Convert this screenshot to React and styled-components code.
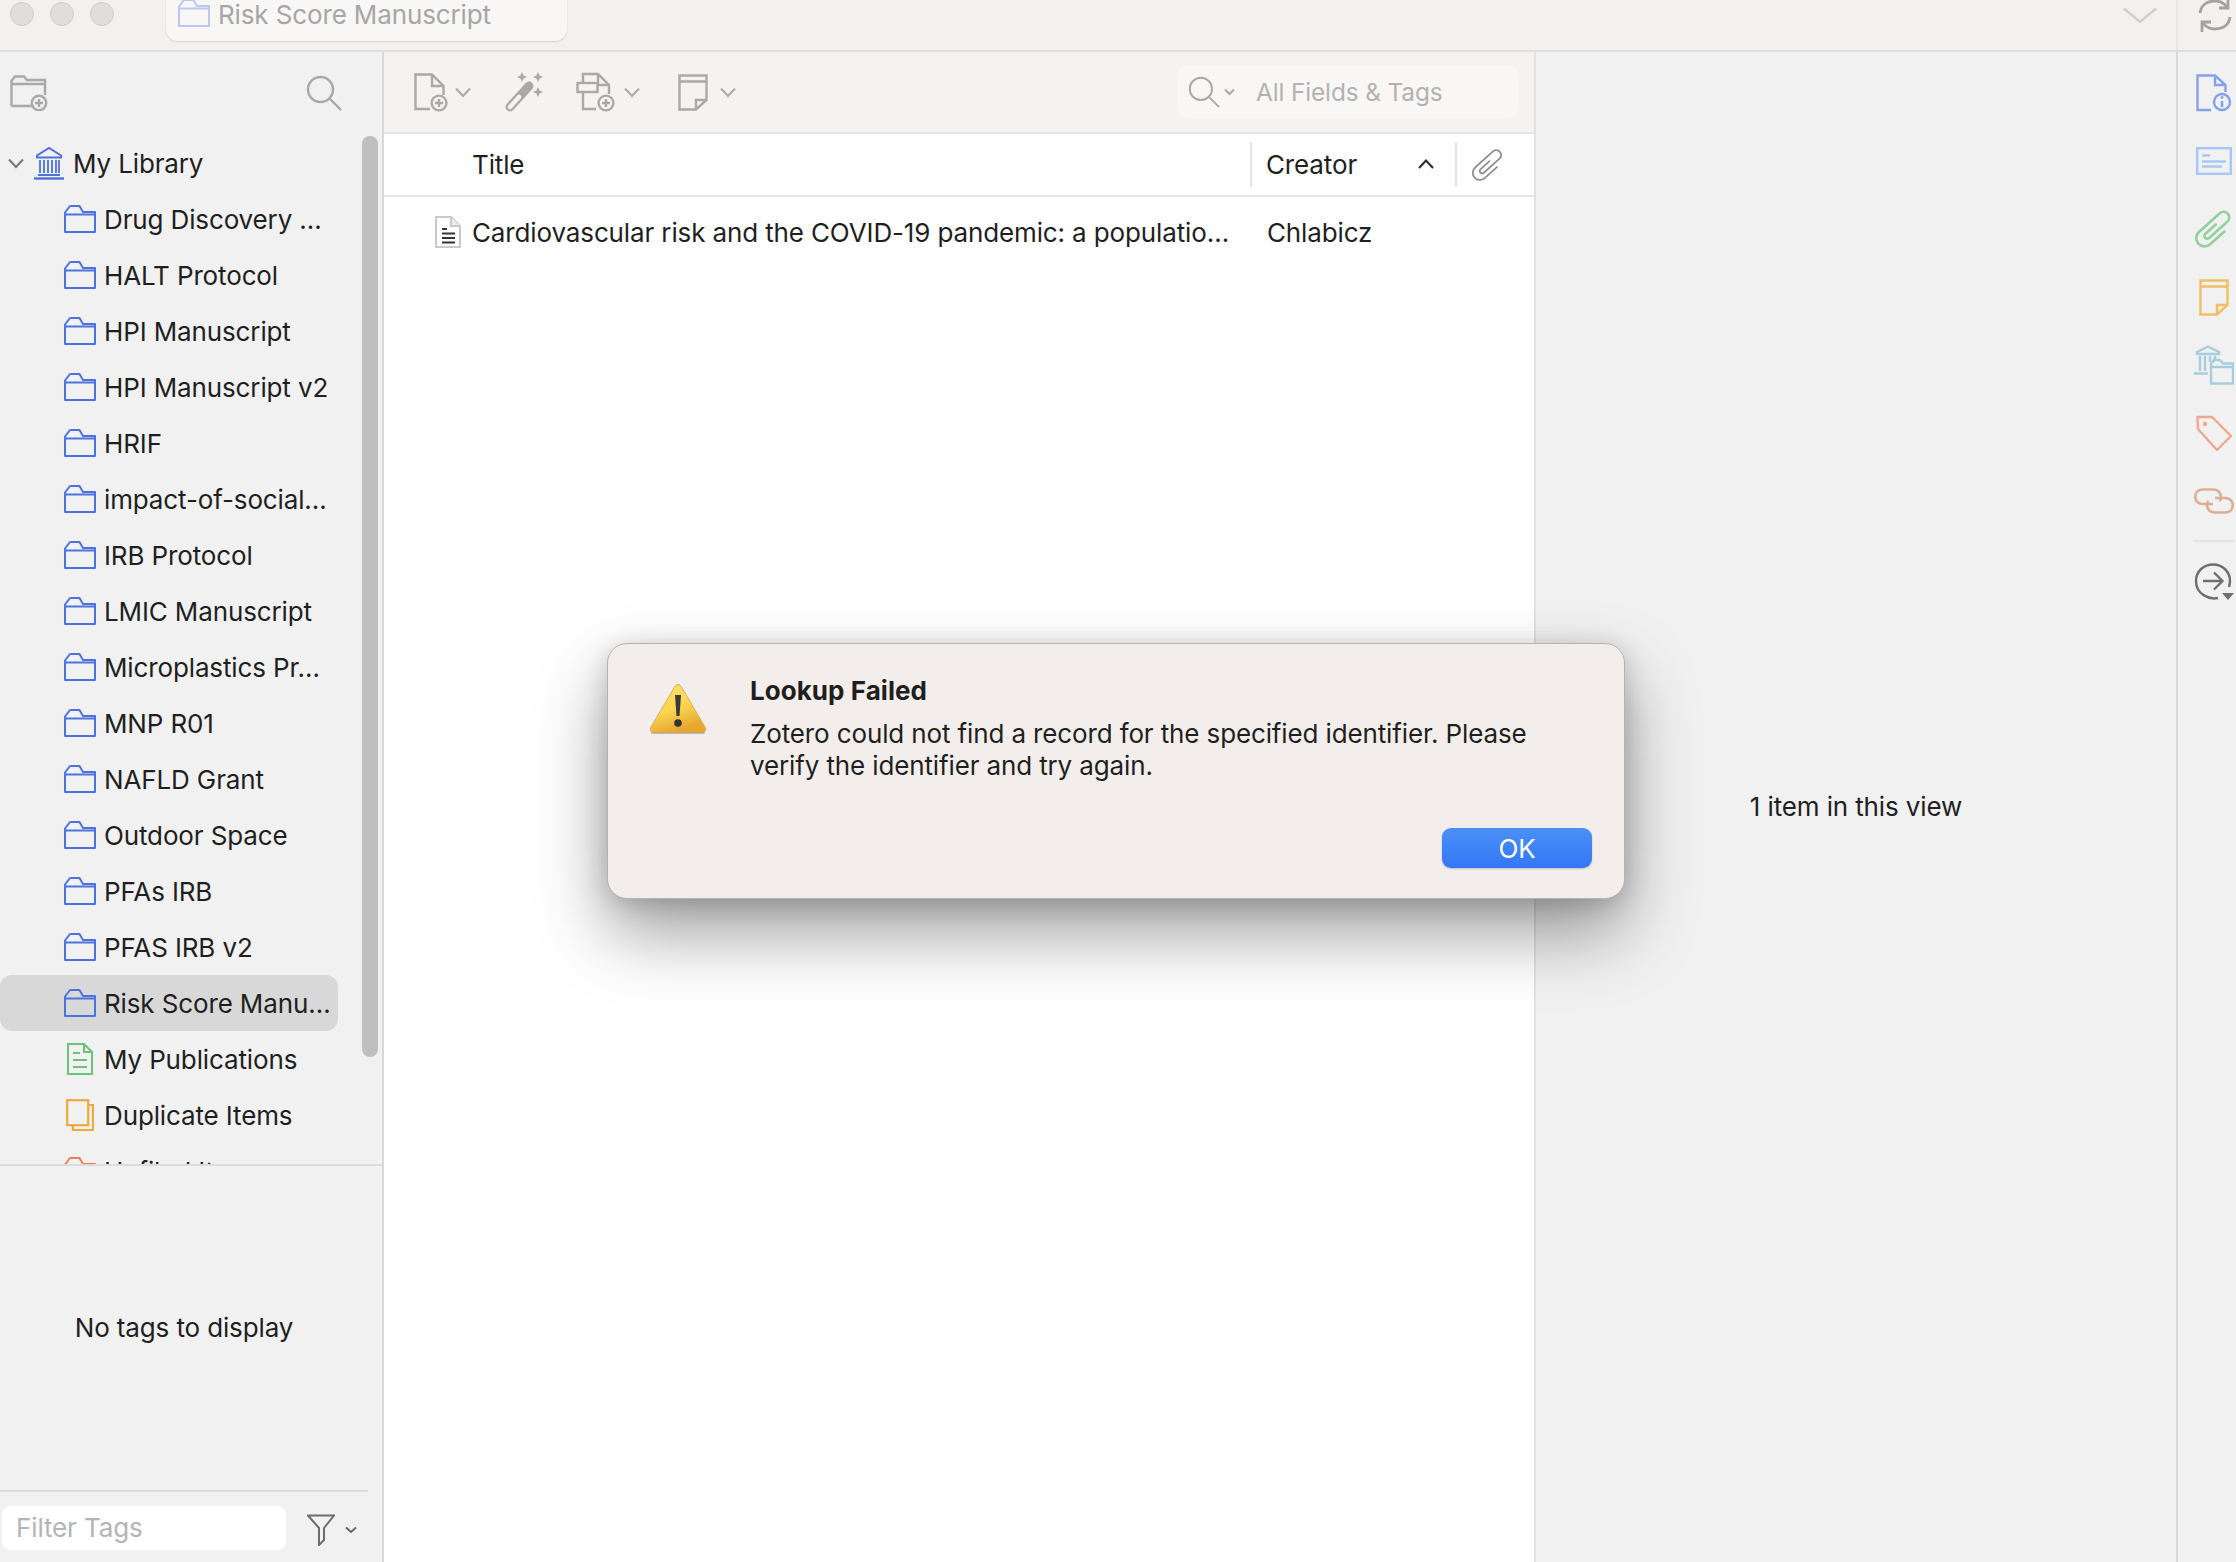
import React from "react";
import styled, { createGlobalStyle } from "styled-components";

const Global = createGlobalStyle`
  html, body { margin: 0; padding: 0; width: 2236px; height: 1562px; overflow: hidden; background: #f1f1f1; }
  * { box-sizing: border-box; }
  body { font-family: Inter, "Noto Sans", "Liberation Sans", sans-serif; color: #1f1f1f; }
`;

const Window = styled.div`
  position: relative; width: 2236px; height: 1562px; display: flex; flex-direction: column; overflow: hidden; font-size: 26px; letter-spacing: -0.13px;
`;
const TopBar = styled.header`
  height: 52px; flex: none; display: flex; background: #f2f1f0; border-bottom: 2px solid #dedede; overflow: hidden;
`;
const Lights = styled.div`
  display: flex; gap: 16px; padding: 2px 0 0 10px; width: 166px; flex: none;
`;
const Light = styled.span`
  width: 24px; height: 24px; border-radius: 50%; background: #dfdedc; border: 1px solid #d0cfcd;
`;
const Tab = styled.div`
  width: 401px; height: 41px; flex: none; display: flex; align-items: flex-start; gap: 8px; padding-left: 12px;
  background: #f8f7f5; border-radius: 0 0 12px 12px; box-shadow: 0 1px 2px rgba(0,0,0,.12); color: #a6a6a6; line-height: 30px;
  svg { margin-top: -1px; flex: none; }
`;
const TopSpacer = styled.div`
  flex: 1; display: flex; justify-content: flex-end; padding: 7px 19px 0 0;
`;
const TopStrip = styled.div`
  width: 60px; flex: none; border-left: 2px solid #e6e6e6; padding: 0 0 0 20px;
  svg { display: block; margin-top: -3px; }
`;
const Main = styled.main`
  flex: 1; display: flex; min-height: 0;
`;
const Sidebar = styled.aside`
  width: 384px; flex: none; display: flex; flex-direction: column; background: #f1f1f1; border-right: 2px solid #d9d9d9; position: relative;
`;
const SideTools = styled.div`
  height: 83px; flex: none; display: flex; justify-content: space-between; padding: 23px 40px 0 10px; align-items: flex-start;
`;
const Tree = styled.ul`
  flex: 1; min-height: 0; margin: 0; padding: 0; list-style: none; overflow: hidden;
`;
const TreeRow = styled.li`
  height: 56px; width: 338px; display: flex; align-items: center; padding-left: ${p => p.$pad}px; border-radius: 12px;
  background: ${p => (p.$selected ? "#d8d8d8" : "transparent")}; white-space: nowrap;
`;
const IconSlot = styled.span`
  width: ${p => p.$w}px; flex: none; display: flex; justify-content: center; align-items: center; margin-right: ${p => p.$mr ?? 8}px;
`;
const Scrollbar = styled.div`
  position: absolute; left: 362px; top: 84px; width: 16px; height: 921px; border-radius: 8px; background: #bfbfbf;
`;
const TagPanel = styled.section`
  height: 326px; flex: none; border-top: 2px solid #dcdcdc; display: flex; align-items: center; justify-content: center; padding: 0 14px 1px 0;
`;
const FilterBar = styled.div`
  height: 72px; flex: none; margin-right: 14px; border-top: 2px solid #dcdcdc; display: flex; align-items: flex-start; padding: 14px 0 0 2px;
`;
const FilterInput = styled.div`
  width: 284px; height: 44px; border-radius: 9px; background: #fff; color: #b4b4b4; line-height: 44px; padding-left: 14px;
`;
const FilterIcon = styled.div`
  display: flex; align-items: center; gap: 10px; padding: 8px 0 0 21px;
`;
const Center = styled.section`
  width: 1152px; flex: none; display: flex; flex-direction: column; background: #fff; border-right: 2px solid #e2e2e2;
`;
const Toolbar = styled.div`
  height: 82px; flex: none; background: #f4f3f1; border-bottom: 2px solid #e6e6e6; display: flex; align-items: flex-start; padding: 20px 16px 0 30px;
`;
const ToolButton = styled.div`
  display: flex; align-items: center; gap: ${p => p.$gap ?? 7}px; margin-right: ${p => p.$mr}px; height: 40px;
`;
const Grow = styled.div`flex: 1;`;
const SearchBox = styled.div`
  width: 340px; height: 53px; margin-top: -7px; border-radius: 9px; background: #f8f7f5; display: flex; align-items: center; padding-left: 10px; color: #b2b2b2;
`;
const SearchChevron = styled.span`margin-left: 4px; display: flex;`;
const SearchLabel = styled.span`margin-left: 21px; font-size: 24.4px;`;
const HeaderRow = styled.div`
  height: 63px; flex: none; display: flex; border-bottom: 2px solid #e6e6e6; align-items: center;
`;
const TitleCol = styled.div`
  width: 866px; padding-left: 88px; flex: none; display: flex; align-items: center;
`;
const Divider = styled.span`
  width: 2px; height: 45px; background: #e4e4e4; flex: none; margin-top: -1px;
`;
const CreatorCol = styled.div`
  width: 203px; padding-left: 14px; padding-right: 21px; flex: none; display: flex; align-items: center; justify-content: space-between;
`;
const ClipCol = styled.div`
  flex: 1; padding-left: 12px; display: flex; align-items: center;
`;
const ItemRow = styled.div`
  height: 70px; display: flex; align-items: center; white-space: nowrap;
`;
const ItemTitle = styled.div`
  width: 868px; flex: none; padding-left: 51px; display: flex; align-items: center; gap: 11px;
`;
const ItemCreator = styled.div`padding-left: 15px;`;
const Pane = styled.section`
  flex: 1; display: flex; align-items: center; justify-content: center; background: #f1f1f1; padding-bottom: 2px;
`;
const Strip = styled.nav`
  width: 60px; flex: none; background: #f1f1f1; border-left: 2px solid #d9d9d9; padding: 7px 0 0 16px; overflow: hidden;
`;
const StripButton = styled.div`
  width: 40px; height: 68px; display: flex; align-items: center; justify-content: center; svg { flex: none; }
`;
const StripRule = styled.div`
  width: 40px; height: 2px; background: #e4e4e4; margin: 5px 0 6px;
`;
const Dialog = styled.div`
  position: absolute; left: 607px; top: 643px; width: 1018px; height: 256px; border-radius: 20px; background: #f3eeeb;
  border: 1px solid #b5b3b1; box-shadow: 0 34px 70px rgba(0,0,0,.38), 0 4px 24px rgba(0,0,0,.16);
  display: grid; grid-template-columns: 142px 1fr;
`;
const AlertIcon = styled.div`padding: 39px 0 0 41px;`;
const AlertBody = styled.div`display: flex; flex-direction: column; padding: 30px 32px 0 0;`;
const AlertTitle = styled.div`font-weight: 700; line-height: 34px; letter-spacing: 0.05px;`;
const AlertText = styled.p`margin: 10px 0 0; line-height: 32px; width: 800px;`;
const OkButton = styled.button`
  position: absolute; right: 32px; bottom: 30px; width: 150px; height: 40px; border: 0; border-radius: 9px; color: #fff; font: inherit; letter-spacing: inherit;
  background: linear-gradient(#4b90f8, #3377f6); box-shadow: 0 1px 2px rgba(0,0,0,.2); padding: 0;
`;

const G = "#a9a9a9";
const Chevron = ({ w = 16, h = 9, c = "#ababab", sw = 2, up }) => (
  <svg width={w} height={h + 2} viewBox={`0 0 ${w} ${h + 2}`} fill="none">
    <path d={up ? `M1 ${h}L${w / 2} 1.5L${w - 1} ${h}` : `M1 1.5L${w / 2} ${h}L${w - 1} 1.5`} stroke={c} strokeWidth={sw} />
  </svg>
);
const Folder = ({ c = "#4c72e0", w = 32, h = 28, sw = 2 }) => (
  <svg width={w} height={h} viewBox="0 0 32 28" fill="none" stroke={c} strokeWidth={sw} strokeLinejoin="round">
    <path d="M1 27V7.5L6 1H15.5L19 7H31V27Z" />
    <path d="M1 9.5H31" />
  </svg>
);
const Library = () => (
  <svg width="30" height="34" viewBox="0 0 30 34" fill="none" stroke="#4c72e0" strokeWidth="2">
    <path d="M3 9.5L15 2L27 9.5V11.5H3Z" />
    <path d="M6 14V27M10 14V27M14 14V27M18 14V27M22 14V27M25 14V27M4 29H26" strokeWidth="1.8" />
    <path d="M0 32.5H30" strokeWidth="2.4" />
  </svg>
);
const FolderAdd = () => (
  <svg width="38" height="36" viewBox="0 0 38 36" fill="none" stroke={G} strokeWidth="2.4">
    <path d="M1.5 31V6L5 1.5H14L17 5H35V20M1.5 31H22M1.5 9H35" />
    <circle cx="29" cy="28" r="7.2" fill="#f1f1f1" />
    <path d="M29 24V32M25 28H33" />
  </svg>
);
const Magnifier = ({ s = 36, c = G, sw = 2.4 }) => (
  <svg width={s} height={s} viewBox="0 0 36 36" fill="none" stroke={c} strokeWidth={sw}>
    <circle cx="14.5" cy="14.5" r="12.5" />
    <path d="M23.5 23.5L35 35" />
  </svg>
);
const DocAdd = () => (
  <svg width="34" height="39" viewBox="0 0 34 39" fill="none" stroke={G} strokeWidth="2.4">
    <path d="M16 36H1.5V1.5H18L29.5 13V22M18 1.5V13H29.5" />
    <circle cx="25" cy="30" r="7.4" fill="#f4f3f1" />
    <path d="M25 26V34M21 30H29" />
  </svg>
);
const Wand = () => (
  <svg width="40" height="40" viewBox="0 0 40 40" fill="none">
    <path d="M5 35L24 14" stroke={G} strokeWidth="9" strokeLinecap="round" />
    <path d="M5 35L14 25" stroke="#f4f3f1" strokeWidth="4.5" strokeLinecap="round" />
    <path fill={G} d="M17 0L18.6 3.4L22 5L18.6 6.6L17 10L15.4 6.6L12 5L15.4 3.4ZM33 0L34.6 3.4L38 5L34.6 6.6L33 10L31.4 6.6L28 5L31.4 3.4ZM33 15L34.6 18.4L38 20L34.6 21.6L33 25L31.4 21.6L28 20L31.4 18.4Z" />
  </svg>
);
const AttachAdd = () => (
  <svg width="40" height="40" viewBox="0 0 40 40" fill="none" stroke={G} strokeWidth="2.4">
    <path d="M7 11V2H22L33 13V22M22 2V13H33M7 20V37H20" />
    <rect x="1.5" y="11" width="20" height="9" fill="#f4f3f1" />
    <circle cx="30" cy="31" r="7.4" fill="#f4f3f1" />
    <path d="M30 27V35M26 31H34" />
  </svg>
);
const Note = ({ c = G, w = 30, h = 37, sw = 2.4 }) => (
  <svg width={w} height={h} viewBox="0 0 30 37" fill="none" stroke={c} strokeWidth={sw}>
    <path d="M1.5 1.5H28.5V26L18 35.5H1.5Z" />
    <path d="M1.5 7.5H28.5M18 35.5V26H28.5" />
  </svg>
);
const Clip = ({ c, w, h, sw }) => (
  <svg width={w} height={h} viewBox="-2 -14 50 48" fill="none">
    <g transform="rotate(-42 23 10)" stroke={c} strokeWidth={sw} strokeLinecap="round">
      <path d="M28 7.5H12a3.25 3.25 0 0 0 0 6.5H40a6.5 6.5 0 0 0 0-13H8a9.5 9.5 0 0 0 0 19H30" />
    </g>
  </svg>
);
const ItemDoc = () => (
  <svg width="26" height="32" viewBox="0 0 26 32" fill="none">
    <path d="M1 1H16L25 10V31H1Z" fill="#fff" stroke="#c9c9c9" strokeWidth="2" />
    <path d="M16 1V10H25" fill="#ececec" stroke="#c9c9c9" strokeWidth="2" />
    <path d="M7 13H12M7 17.5H20M7 22H20M7 26.5H20" stroke="#333" strokeWidth="2" />
  </svg>
);
const PubDoc = () => (
  <svg width="26" height="32" viewBox="0 0 26 32" fill="none" stroke="#6cc27c" strokeWidth="2">
    <path d="M1 1H17L25 9V31H1Z" />
    <path d="M17 1V9H25M6 10H13M6 17H20M6 24H20" />
  </svg>
);
const Duplicate = () => (
  <svg width="28" height="32" viewBox="0 0 28 32" fill="none" stroke="#efa93a" strokeWidth="2.2">
    <rect x="1.2" y="1.2" width="21" height="25" />
    <path d="M22 6H27V31H7V26" />
  </svg>
);
const Warning = () => (
  <svg width="58" height="52" viewBox="0 0 58 52">
    <defs>
      <linearGradient id="warn" x1="0" y1="0" x2="0.35" y2="1">
        <stop offset="0" stopColor="#fbe46a" />
        <stop offset="0.6" stopColor="#f8d44f" />
        <stop offset="1" stopColor="#e9a731" />
      </linearGradient>
    </defs>
    <path d="M29 1.5C31 1.5 32 3 33 5L56 44C57.5 47 56.5 49.5 53 49.5H5C1.5 49.5 .5 47 2 44L25 5C26 3 27 1.5 29 1.5Z" fill="url(#warn)" stroke="#d9b04f" strokeWidth="1" />
    <path d="M2.5 50H55.5" stroke="#b9a585" strokeWidth="1.5" />
    <path d="M26 12H32L30.5 33H27.5Z" fill="#3a3a3a" />
    <circle cx="29" cy="40" r="3.8" fill="#333" />
  </svg>
);
const Sync = () => (
  <svg width="34" height="36" viewBox="0 0 34 36" fill="none" stroke="#a2a2a2" strokeWidth="2.8">
    <path d="M2 16C3 8 9 4 17 4C22 4 26 6 29 10M32 20C31 28 25 32 17 32C12 32 8 30 5 26" />
    <path d="M30 1V11H21M4 35V25H13" />
  </svg>
);
const InfoDoc = () => (
  <svg width="36" height="38" viewBox="0 0 36 38" fill="none" stroke="#84a2ea" strokeWidth="2.4">
    <path d="M15 36H1.5V1.5H19L29.5 11V18M19 1.5V11H29.5" />
    <circle cx="26" cy="28" r="8" fill="#f1f1f1" />
    <path d="M26 27V33" strokeWidth="2.6" />
    <circle cx="26" cy="23.5" r="1.4" fill="#84a2ea" stroke="none" />
  </svg>
);
const Card = () => (
  <svg width="36" height="28" viewBox="0 0 36 28" fill="none" stroke="#a9c7f5" strokeWidth="2.4">
    <rect x="1.2" y="1.2" width="33.6" height="25.6" />
    <path d="M6 8.5H14M6 14.5H30M6 19.5H26" />
  </svg>
);
const LibFolder = () => (
  <svg width="40" height="40" viewBox="0 0 40 40" fill="none" stroke="#a6cddd" strokeWidth="2.4">
    <path d="M3 7L14 1.5L25 7V9H3Z" />
    <path d="M6 11V26M11 11V26M16 11V17M21 11V17M0 28.5H14" />
    <path d="M17 38.5V19L20 15H26L29 18.5H39V38.5Z" fill="#f1f1f1" />
    <path d="M17 22H39" />
  </svg>
);
const Tag = () => (
  <svg width="36" height="36" viewBox="0 0 36 36" fill="none" stroke="#f3a68f" strokeWidth="2.4" strokeLinejoin="round">
    <path d="M1.5 2H16L35 21L21 35L2 14Z" />
    <circle cx="9" cy="9" r="2.2" fill="#f3a68f" stroke="none" />
  </svg>
);
const Link = () => (
  <svg width="40" height="26" viewBox="0 0 40 26" fill="none" stroke="#dcae94" strokeWidth="2.6">
    <path d="M19 16H9C4.5 16 1.2 13 1.2 9C1.2 4.5 4.5 1.5 9 1.5H19C23.5 1.5 27 4.5 27 9C27 10.5 26.5 12 25.5 13" />
    <path d="M21 10H31C35.5 10 38.8 13 38.8 17C38.8 21.5 35.5 24.5 31 24.5H21C16.5 24.5 13 21.5 13 17C13 15.5 13.5 14 14.5 13" />
  </svg>
);
const Locate = () => (
  <svg width="40" height="38" viewBox="0 0 40 38" fill="none" stroke="#6f6f6f" strokeWidth="2.4">
    <path d="M24 35C15 37 2 31 2 18C2 8 10 1.5 19 1.5C28 1.5 36 8 36 18C36 20 35.5 22 35 24" />
    <path d="M9 18H28M20 9.5L28.5 18L20 26.5" />
    <path d="M28 30H40L34 37Z" fill="#6f6f6f" stroke="none" />
  </svg>
);
const Funnel = () => (
  <svg width="28" height="32" viewBox="0 0 28 32" fill="none" stroke="#6d6d6d" strokeWidth="2">
    <path d="M1 1.5H27L17 14V26L12 31V14Z" />
  </svg>
);

const folders = [
  "Drug Discovery …", "HALT Protocol", "HPI Manuscript", "HPI Manuscript v2", "HRIF", "impact-of-social…",
  "IRB Protocol", "LMIC Manuscript", "Microplastics Pr…", "MNP R01", "NAFLD Grant", "Outdoor Space",
  "PFAs IRB", "PFAS IRB v2",
];

export default function App() {
  return (
    <Window>
      <Global />
      <TopBar>
        <Lights><Light /><Light /><Light /></Lights>
        <Tab><Folder c="#b9c8ef" />Risk Score Manuscript</Tab>
        <TopSpacer><Chevron w={34} h={15} c="#cfcfcf" sw={2.4} /></TopSpacer>
        <TopStrip><Sync /></TopStrip>
      </TopBar>
      <Main>
        <Sidebar>
          <SideTools><FolderAdd /><Magnifier /></SideTools>
          <Tree>
            <TreeRow $pad={8}>
              <IconSlot $w={16} $mr={10}><Chevron c="#777" /></IconSlot>
              <IconSlot $w={30} $mr={9}><Library /></IconSlot>
              My Library
            </TreeRow>
            {folders.map(name => (
              <TreeRow key={name} $pad={64}>
                <IconSlot $w={32}><Folder /></IconSlot>{name}
              </TreeRow>
            ))}
            <TreeRow $pad={64} $selected>
              <IconSlot $w={32}><Folder /></IconSlot>Risk Score Manu…
            </TreeRow>
            <TreeRow $pad={64}><IconSlot $w={32}><PubDoc /></IconSlot>My Publications</TreeRow>
            <TreeRow $pad={64}><IconSlot $w={32}><Duplicate /></IconSlot>Duplicate Items</TreeRow>
            <TreeRow $pad={64}><IconSlot $w={32}><Folder c="#ef7d57" /></IconSlot>Unfiled Items</TreeRow>
          </Tree>
          <Scrollbar />
          <TagPanel>No tags to display</TagPanel>
          <FilterBar>
            <FilterInput>Filter Tags</FilterInput>
            <FilterIcon><Funnel /><Chevron w={12} h={6} c="#666" /></FilterIcon>
          </FilterBar>
        </Sidebar>
        <Center>
          <Toolbar>
            <ToolButton $mr={34}><DocAdd /><Chevron /></ToolButton>
            <ToolButton $mr={31}><Wand /></ToolButton>
            <ToolButton $mr={38} $gap={8}><AttachAdd /><Chevron /></ToolButton>
            <ToolButton $mr={0} $gap={12}><Note /><Chevron /></ToolButton>
            <Grow />
            <SearchBox>
              <Magnifier s={32} sw={2.2} />
              <SearchChevron><Chevron w={11} h={6} c="#a8a8a8" /></SearchChevron>
              <SearchLabel>All Fields &amp; Tags</SearchLabel>
            </SearchBox>
          </Toolbar>
          <HeaderRow>
            <TitleCol>Title</TitleCol>
            <Divider />
            <CreatorCol>Creator<Chevron w={16} h={9} c="#2a2a2a" up /></CreatorCol>
            <Divider />
            <ClipCol><Clip c="#8f8f8f" w={38} h={36} sw={2.4} /></ClipCol>
          </HeaderRow>
          <ItemRow>
            <ItemTitle><ItemDoc />Cardiovascular risk and the COVID-19 pandemic: a populatio…</ItemTitle>
            <ItemCreator>Chlabicz</ItemCreator>
          </ItemRow>
        </Center>
        <Pane>1 item in this view</Pane>
        <Strip>
          <StripButton><InfoDoc /></StripButton>
          <StripButton><Card /></StripButton>
          <StripButton><Clip c="#93d09b" w={44} h={42} sw={3} /></StripButton>
          <StripButton><Note c="#efc063" /></StripButton>
          <StripButton><LibFolder /></StripButton>
          <StripButton><Tag /></StripButton>
          <StripButton><Link /></StripButton>
          <StripRule />
          <StripButton><Locate /></StripButton>
        </Strip>
      </Main>
      <Dialog>
        <AlertIcon><Warning /></AlertIcon>
        <AlertBody>
          <AlertTitle>Lookup Failed</AlertTitle>
          <AlertText>Zotero could not find a record for the specified identifier. Please verify the identifier and try again.</AlertText>
        </AlertBody>
        <OkButton>OK</OkButton>
      </Dialog>
    </Window>
  );
}
